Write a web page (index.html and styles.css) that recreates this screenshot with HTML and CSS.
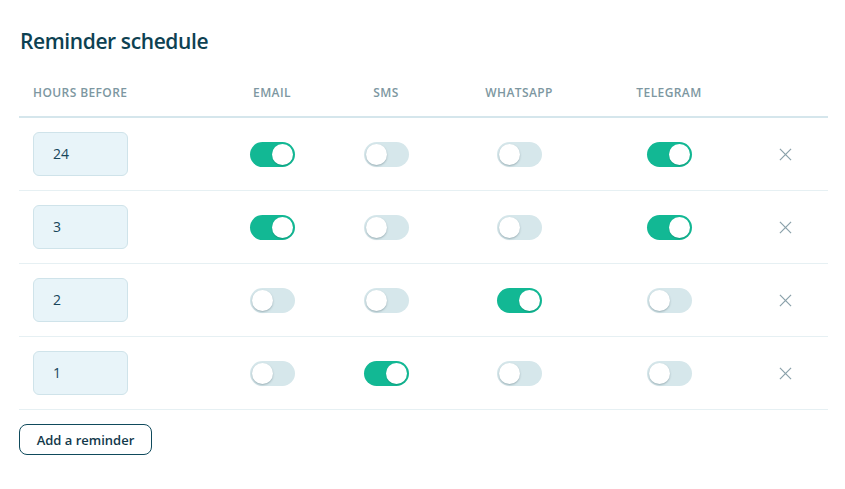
FILE: index.html
```html
<!DOCTYPE html>
<html>
<head>
<meta charset="utf-8">
<link rel="stylesheet" href="styles.css">
</head>
<body>
<div class="page">
  <h1 class="title">Reminder schedule</h1>
  <div class="table">
    <div class="row head">
      <div class="cell first">HOURS BEFORE</div>
      <div class="cell">EMAIL</div>
      <div class="cell">SMS</div>
      <div class="cell">WHATSAPP</div>
      <div class="cell">TELEGRAM</div>
      <div class="cell"></div>
    </div>
    <div class="row">
      <div class="cell first"><div class="input">24</div></div>
      <div class="cell"><span class="toggle on"></span></div>
      <div class="cell"><span class="toggle"></span></div>
      <div class="cell"><span class="toggle"></span></div>
      <div class="cell"><span class="toggle on"></span></div>
      <div class="cell"><svg class="x" viewBox="0 0 14 14"><path d="M1 1L13 13M13 1L1 13"/></svg></div>
    </div>
    <div class="row">
      <div class="cell first"><div class="input">3</div></div>
      <div class="cell"><span class="toggle on"></span></div>
      <div class="cell"><span class="toggle"></span></div>
      <div class="cell"><span class="toggle"></span></div>
      <div class="cell"><span class="toggle on"></span></div>
      <div class="cell"><svg class="x" viewBox="0 0 14 14"><path d="M1 1L13 13M13 1L1 13"/></svg></div>
    </div>
    <div class="row">
      <div class="cell first"><div class="input">2</div></div>
      <div class="cell"><span class="toggle"></span></div>
      <div class="cell"><span class="toggle"></span></div>
      <div class="cell"><span class="toggle on"></span></div>
      <div class="cell"><span class="toggle"></span></div>
      <div class="cell"><svg class="x" viewBox="0 0 14 14"><path d="M1 1L13 13M13 1L1 13"/></svg></div>
    </div>
    <div class="row">
      <div class="cell first"><div class="input">1</div></div>
      <div class="cell"><span class="toggle"></span></div>
      <div class="cell"><span class="toggle on"></span></div>
      <div class="cell"><span class="toggle"></span></div>
      <div class="cell"><span class="toggle"></span></div>
      <div class="cell"><svg class="x" viewBox="0 0 14 14"><path d="M1 1L13 13M13 1L1 13"/></svg></div>
    </div>
  </div>
  <button class="add">Add a reminder</button>
</div>
</body>
</html>
```

FILE: styles.css
```css
html, body {
  margin: 0;
  padding: 0;
  background: #ffffff;
  font-family: "Open Sans", "Noto Sans", sans-serif;
}
.page {
  width: 809px;
  padding: 26px 0 0 19px;
}
.title {
  margin: 0 0 0 1px;
  font-size: 21px;
  font-weight: 600;
  color: #0d4152;
  line-height: 30px;
  letter-spacing: -0.4px;
}
.table {
  margin-top: 10px;
}
.row {
  display: grid;
  grid-template-columns: 196px 114px 114px 152px 148px 85px;
  height: 72px;
  border-bottom: 1px solid #e6f0f3;
  align-items: center;
}
.row.head {
  height: 31px;
  padding-top: 19px;
  border-bottom: 2px solid #d5e6ec;
  align-items: start;
}
.cell {
  display: flex;
  justify-content: center;
  align-items: center;
}
.cell.first {
  justify-content: flex-start;
  padding-left: 14px;
}
.head .cell {
  font-size: 12px;
  font-weight: 600;
  letter-spacing: 0.4px;
  color: #7d97a1;
  line-height: 16px;
}
.input {
  box-sizing: border-box;
  width: 95px;
  height: 44px;
  background: #e8f4f9;
  border: 1px solid #cfe3ea;
  border-radius: 6px;
  padding-left: 19px;
  font-size: 14px;
  color: #17455a;
  line-height: 42px;
}
.toggle {
  position: relative;
  display: block;
  width: 45px;
  height: 25px;
  border-radius: 13px;
  background: #d6e7eb;
}
.toggle::after {
  content: "";
  position: absolute;
  top: 2px;
  left: 2px;
  width: 21px;
  height: 21px;
  border-radius: 50%;
  background: #ffffff;
  box-shadow: 0 1px 2px rgba(40, 70, 80, 0.35);
}
.toggle.on {
  background: #12b894;
}
.toggle.on::after {
  left: 22px;
  box-shadow: 0 1px 1px rgba(0, 80, 60, 0.25);
}
.x {
  width: 13px;
  height: 13px;
  fill: none;
  stroke: #8aa1aa;
  stroke-width: 1.3;
}
.add {
  margin-top: 14px;
  height: 31px;
  width: 133px;
  box-sizing: border-box;
  background: #ffffff;
  border: 1px solid #0f4a5c;
  border-radius: 8px;
  font-family: "Open Sans", "Noto Sans", sans-serif;
  font-size: 13px;
  font-weight: 600;
  color: #12394b;
  padding: 0;
  cursor: pointer;
}
```
